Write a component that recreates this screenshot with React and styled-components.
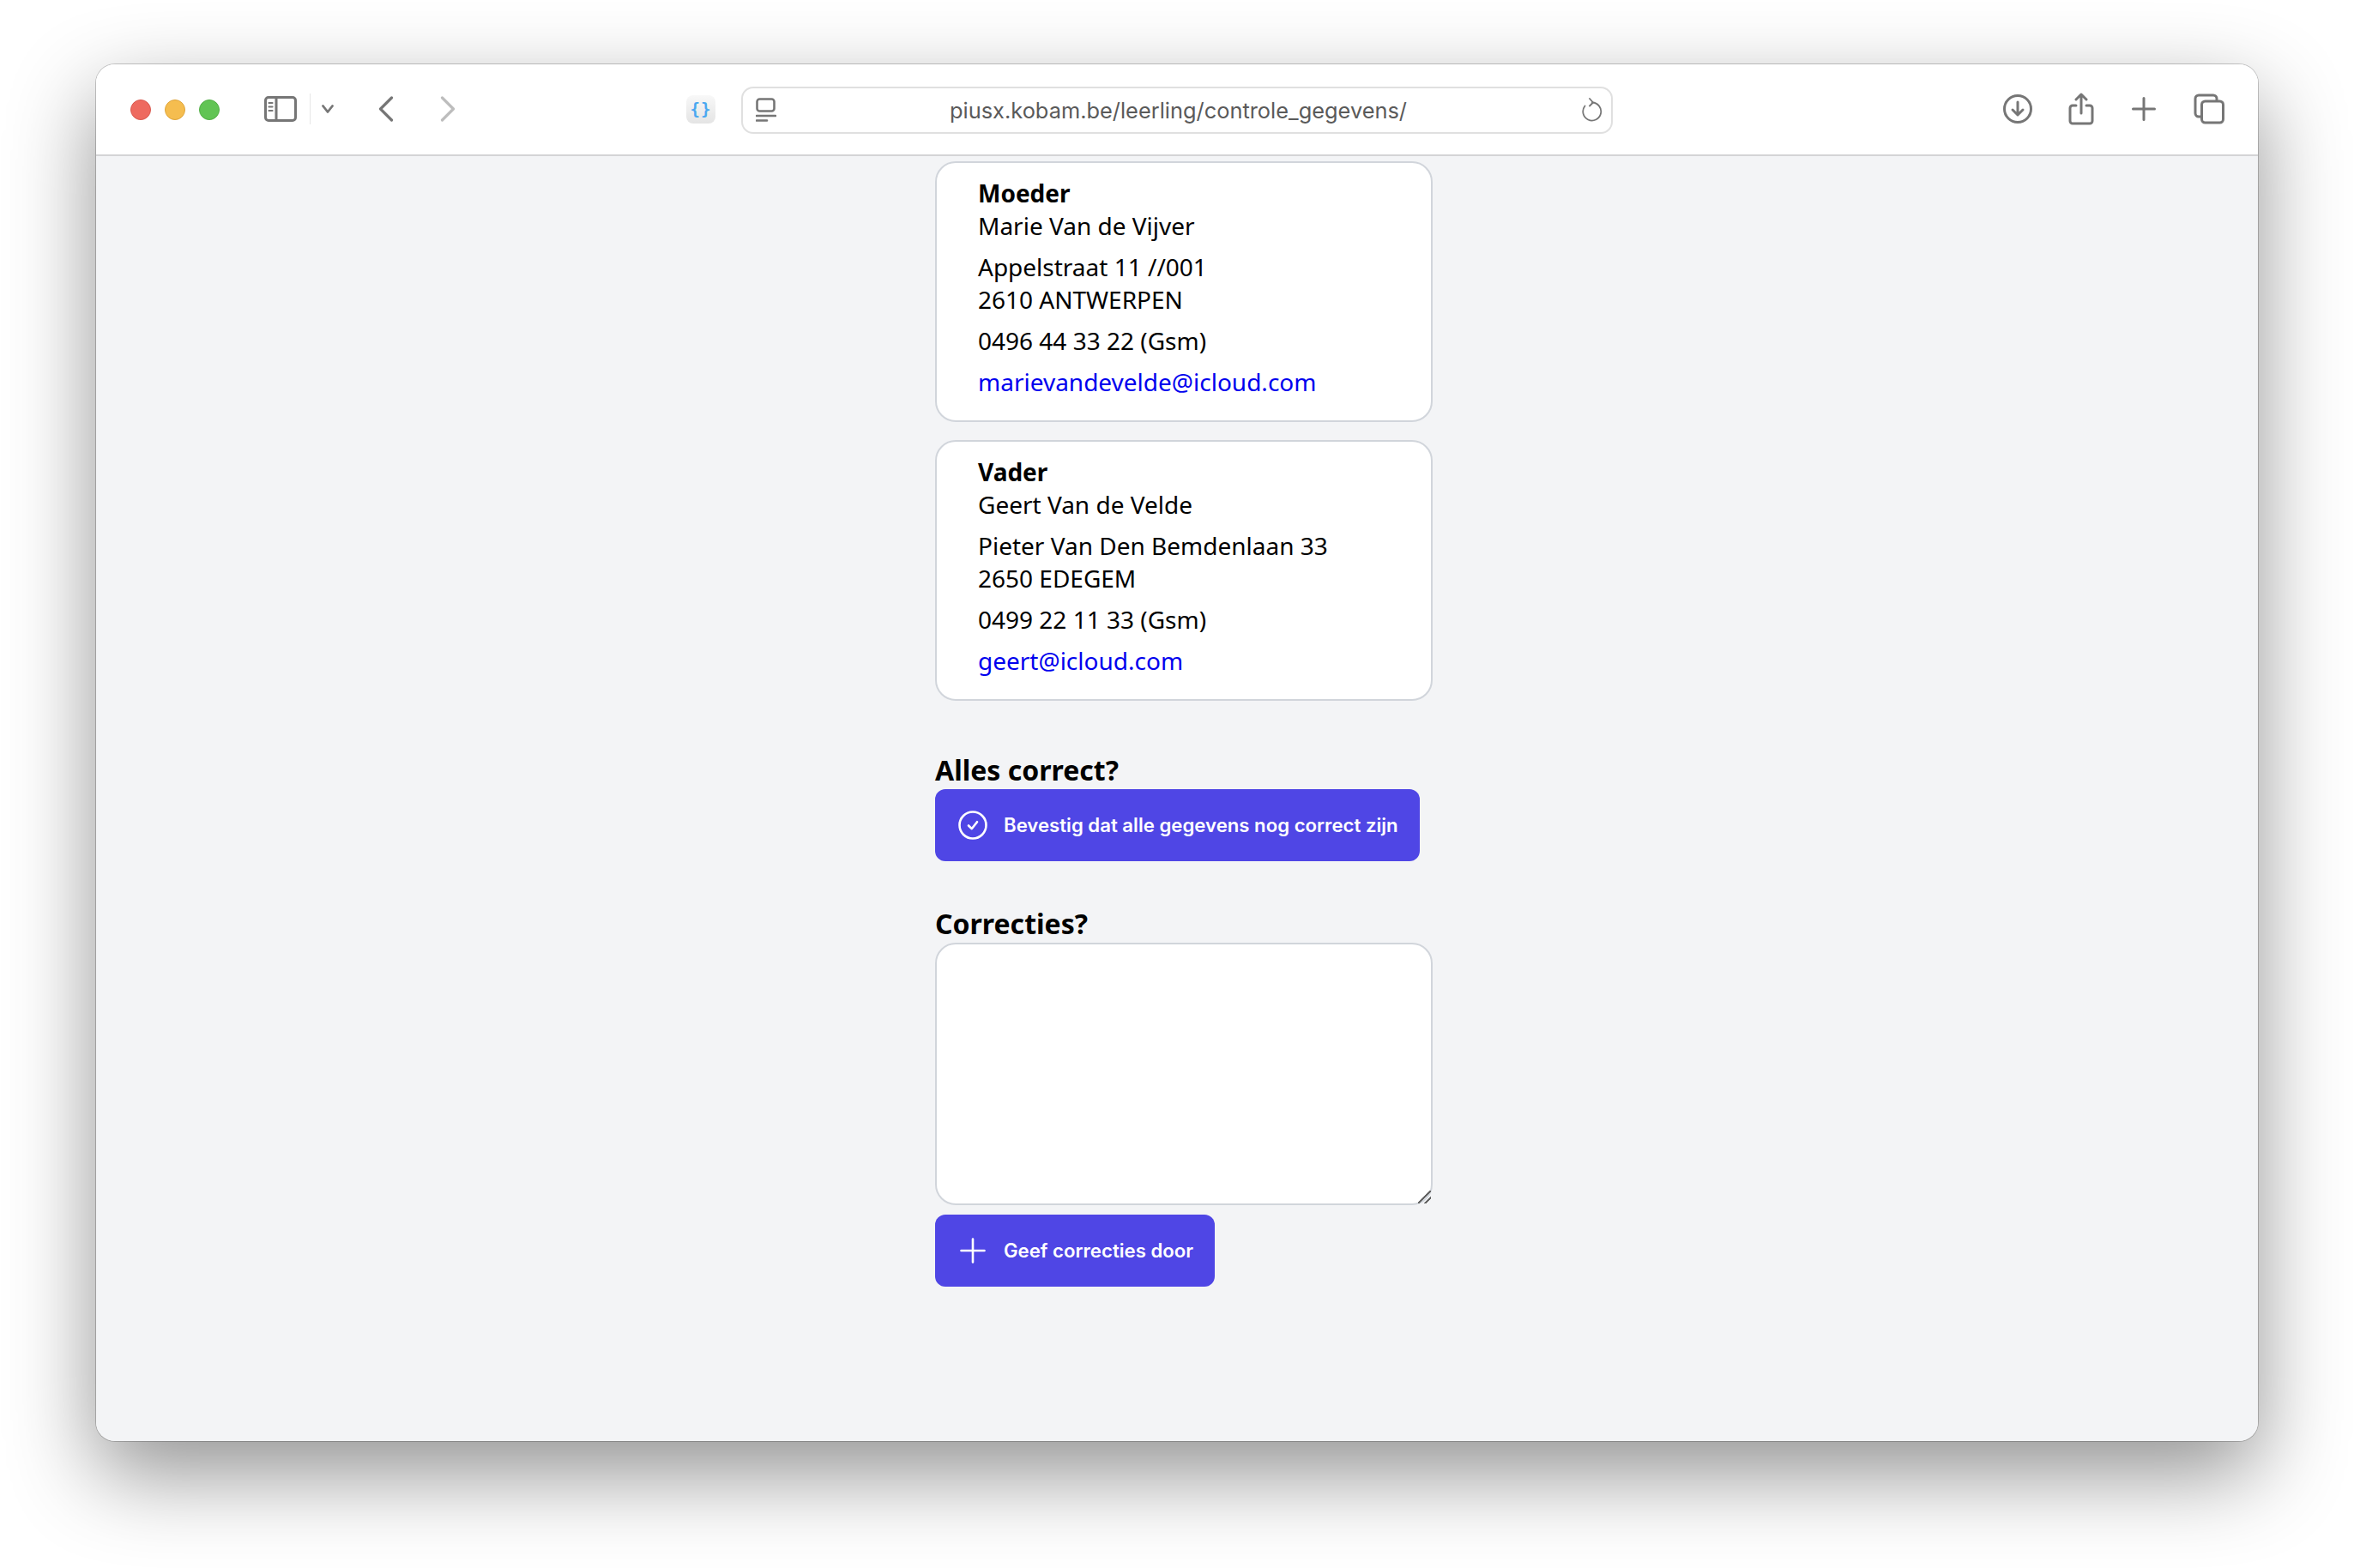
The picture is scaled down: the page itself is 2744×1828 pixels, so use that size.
import React from "react";
import styled, { createGlobalStyle } from "styled-components";

const Global = createGlobalStyle`
  html, body { margin: 0; padding: 0; background: #fff; }
  body { width: 2744px; height: 1828px; overflow: hidden; font-family: "Noto Sans", "Liberation Sans", sans-serif; }
  * { box-sizing: border-box; }
`;

const Stage = styled.div`
  width: 2744px;
  height: 1828px;
  padding: 75px 112px 148px;
  background: #fff;
`;

const Win = styled.div`
  height: 1605px;
  border-radius: 22px;
  overflow: hidden;
  background: #f3f4f6;
  display: flex;
  flex-direction: column;
`;

const WinShadow = styled.div`
  height: 1605px;
  border-radius: 22px;
  box-shadow: 0 0 0 1px rgba(0, 0, 0, 0.2), 0 38px 100px rgba(0, 0, 0, 0.43);
`;

const Toolbar = styled.header`
  height: 107px;
  flex: none;
  background: #fff;
  border-bottom: 2px solid #d4d4d6;
  display: flex;
  align-items: center;
  padding: 0 39px 1px 40px;
`;

const Lights = styled.div`
  display: flex;
  gap: 16px;
  margin-top: 2px;
`;

const Light = styled.span`
  width: 24px;
  height: 24px;
  border-radius: 50%;
  background: ${(p) => p.$c};
  border: 1px solid ${(p) => p.$b};
`;

const ToolIcon = styled.svg`
  flex: none;
  margin-left: ${(p) => p.$ml || 0}px;
  fill: none;
  stroke: ${(p) => p.$stroke || "#767676"};
  stroke-width: ${(p) => p.$sw || 3};
  stroke-linecap: round;
  stroke-linejoin: round;
`;

const Divider = styled.span`
  width: 1px;
  height: 36px;
  margin-left: 15px;
  background: #e6e6e6;
  flex: none;
`;

const ExtBadge = styled.span`
  width: 34px;
  height: 33px;
  margin-left: 269px;
  flex: none;
  border-radius: 8px;
  background: linear-gradient(#f8f8f8, #e4e4e4);
  display: flex;
  align-items: center;
  justify-content: center;
  color: #4aa8f0;
  font: 700 19px/1 "DejaVu Sans Mono", monospace;
  letter-spacing: 1px;
`;

const Address = styled.div`
  width: 1016px;
  height: 55px;
  margin: 2px 0 0 30px;
  flex: none;
  border: 2px solid #e0e0e0;
  border-radius: 14px;
  background: #fff;
  display: flex;
  align-items: center;
  padding: 0 10px 0 15px;
`;

const Url = styled.span`
  flex: 1;
  text-align: center;
  font: 400 25.4px/1 Inter, "Liberation Sans", sans-serif;
  color: #5a5a5a;
  padding-top: 2px;
  white-space: nowrap;
`;

const Spacer = styled.span`
  flex: 1;
`;

const Content = styled.main`
  flex: 1;
  padding: 6px 0 0 978px;
  display: flex;
  flex-direction: column;
  align-items: flex-start;
`;

const Card = styled.section`
  width: 580px;
  height: 304px;
  margin-bottom: 21px;
  padding: 16px 48px 0;
  background: #fff;
  border: 2px solid #d1d5db;
  border-radius: 24px;
  font-size: 28px;
  line-height: 38px;
  color: #000;
`;

const Block = styled.p`
  margin: 0 0 10px;
`;

const Strong = styled.strong`
  display: block;
  font-weight: 700;
`;

const Mail = styled.a`
  color: #0000ee;
  text-decoration: none;
`;

const Heading = styled.h2`
  margin: ${(p) => p.$mt}px 0 1px;
  font-size: 32px;
  line-height: 42px;
  font-weight: 700;
  color: #000;
`;

const Action = styled.button`
  height: 84px;
  margin-top: ${(p) => p.$mt || 0}px;
  padding: 0 25px 0 24px;
  border: 0;
  border-radius: 12px;
  background: #4f46e5;
  color: #fff;
  display: flex;
  align-items: center;
  gap: 16px;
  font: 600 22.2px/1 Inter, "Liberation Sans", sans-serif;
`;

const ActionIcon = styled.svg`
  width: 40px;
  height: 40px;
  flex: none;
  fill: none;
  stroke: #fff;
  stroke-width: 2.6;
  stroke-linecap: round;
  stroke-linejoin: round;
`;

const Notes = styled.textarea`
  display: block;
  width: 580px;
  height: 306px;
  background: #fff;
  border: 2px solid #d1d5db;
  border-radius: 24px;
  outline: none;
  padding: 16px;
  font: 28px "Noto Sans", sans-serif;

  &::-webkit-resizer {
    background: linear-gradient(
      135deg,
      transparent 46%,
      #666 46%,
      #666 55%,
      transparent 55%,
      transparent 72%,
      #666 72%,
      #666 81%,
      transparent 81%
    );
  }
`;

const people = [
  { role: "Moeder", name: "Marie Van de Vijver", street: "Appelstraat 11 //001", city: "2610 ANTWERPEN", phone: "0496 44 33 22 (Gsm)", mail: "marievandevelde@icloud.com" },
  { role: "Vader", name: "Geert Van de Velde", street: "Pieter Van Den Bemdenlaan 33", city: "2650 EDEGEM", phone: "0499 22 11 33 (Gsm)", mail: "geert@icloud.com" },
];

export default function App() {
  return (
    <Stage>
      <Global />
      <WinShadow>
        <Win>
          <Toolbar>
            <Lights>
              <Light $c="#ee6a5f" $b="#d95a50" />
              <Light $c="#f5bd4f" $b="#dfa53a" />
              <Light $c="#61c454" $b="#52ae46" />
            </Lights>
            <ToolIcon $ml={52} width="38" height="30" viewBox="0 0 38 30">
              <rect x="1.5" y="1.5" width="35" height="27" rx="3.5" />
              <path d="M14 1.5v27" />
              <path d="M5.5 8h4M5.5 12.5h4M5.5 17h4" strokeWidth="2.2" />
            </ToolIcon>
            <Divider />
            <ToolIcon $ml={13} $sw={2.8} width="14" height="10" viewBox="0 0 14 10">
              <path d="M1.5 1.5 7 8.5l5.5-7" />
            </ToolIcon>
            <ToolIcon $ml={52} $sw={3.2} width="18" height="30" viewBox="0 0 18 30">
              <path d="M15.5 2 2.5 15l13 13" />
            </ToolIcon>
            <ToolIcon $ml={54} $sw={3.2} $stroke="#bdbdbd" width="18" height="30" viewBox="0 0 18 30">
              <path d="M2.5 2l13 13-13 13" />
            </ToolIcon>
            <ExtBadge>{"{}"}</ExtBadge>
            <Address>
              <ToolIcon $sw={2.6} width="24" height="28" viewBox="0 0 24 28">
                <rect x="1.5" y="1.5" width="20" height="14" rx="3" />
                <path d="M1 21h22M1 26.500h12" />
              </ToolIcon>
              <Url>piusx.kobam.be/leerling/controle_gegevens/</Url>
              <ToolIcon $sw={1.8} width="26" height="28" viewBox="0 0 26 28">
                <path d="M14 5.500A10.500 10.500 0 1 1 5.500 9.500" />
                <path d="M11 1l4 4.500-4 4" />
              </ToolIcon>
            </Address>
            <Spacer />
            <ToolIcon $sw={3} width="34" height="34" viewBox="0 0 34 34">
              <circle cx="17" cy="17" r="15.500" />
              <path d="M17 9v15M11 18l6 6 6-6" />
            </ToolIcon>
            <ToolIcon $ml={41} $sw={3} width="32" height="38" viewBox="0 0 32 38">
              <path d="M10 15H6a3 3 0 0 0-3 3v15a3 3 0 0 0 3 3h20a3 3 0 0 0 3-3V18a3 3 0 0 0-3-3h-4" />
              <path d="M16 24V2M10 8l6-6 6 6" />
            </ToolIcon>
            <ToolIcon $ml={43} $sw={3} width="28" height="28" viewBox="0 0 28 28">
              <path d="M14 1.500v25M1.500 14h25" />
            </ToolIcon>
            <ToolIcon $ml={44} $sw={3} width="36" height="36" viewBox="0 0 36 36">
              <path d="M8.500 27H6a4 4 0 0 1-4-4V6a4 4 0 0 1 4-4h17a4 4 0 0 1 4 4v2.500" />
              <rect x="9.500" y="9" width="25" height="25" rx="4" />
            </ToolIcon>
          </Toolbar>
          <Content>
            {people.map((p) => (
              <Card key={p.role}>
                <Block>
                  <Strong>{p.role}</Strong>
                  {p.name}
                </Block>
                <Block>
                  {p.street}
                  <br />
                  {p.city}
                </Block>
                <Block>{p.phone}</Block>
                <Block>
                  <Mail href="#">{p.mail}</Mail>
                </Block>
              </Card>
            ))}
            <Heading $mt={39}>Alles correct?</Heading>
            <Action type="button">
              <ActionIcon viewBox="0 0 40 40">
                <circle cx="20" cy="20" r="15.500" />
                <path d="M15 20.500l3.700 3.700 6.300-8" />
              </ActionIcon>
              Bevestig dat alle gegevens nog correct zijn
            </Action>
            <Heading $mt={52}>Correcties?</Heading>
            <Notes />
            <Action type="button" $mt={11}>
              <ActionIcon viewBox="0 0 40 40">
                <path d="M20 6.500v27M6.500 20h27" />
              </ActionIcon>
              Geef correcties door
            </Action>
          </Content>
        </Win>
      </WinShadow>
    </Stage>
  );
}
